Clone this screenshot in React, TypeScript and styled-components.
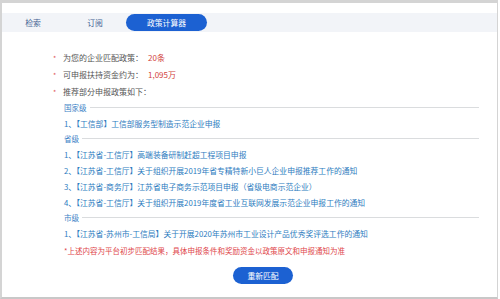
import React from "react";
import styled, { createGlobalStyle } from "styled-components";

const Global = createGlobalStyle`
  html, body { margin: 0; padding: 0; background: #ffffff; }
  body { font-family: "Noto Sans CJK SC", "Noto Sans", sans-serif; }
  * { box-sizing: border-box; }
`;

const Frame = styled.div`
  width: 498px;
  height: 299px;
  border-top: 3px solid #d4d4d4;
  border-left: 2px solid #d4d4d4;
  border-right: 1px solid #d4d4d4;
  border-bottom: 2px solid #c8c8c8;
  background: #ffffff;
  display: flex;
  flex-direction: column;
`;

const TabBar = styled.div`
  margin-top: 10px;
  height: 19px;
  background: #f2f4f8;
  display: grid;
  grid-template-columns: 62px 62px 81px;
  align-items: center;
`;

const Tab = styled.div<{ $active?: boolean }>`
  height: 17px;
  display: flex;
  align-items: center;
  justify-content: center;
  font-size: 7.8px;
  color: ${(p) => (p.$active ? "#ffffff" : "#3f5f92")};
  background: ${(p) => (p.$active ? "#1c61d2" : "transparent")};
  border-radius: 9px;
`;

const Content = styled.div`
  padding: 17px 18px 0 49px;
  display: flex;
  flex-direction: column;
`;

const InfoRow = styled.div`
  display: flex;
  align-items: center;
  height: 17px;
  font-size: 8px;
  color: #555555;
  white-space: nowrap;
`;

const Star = styled.span`
  flex: none;
  width: 12px;
  padding-left: 2px;
  color: #e05858;
  font-size: 7px;
`;

const Label = styled.span`
  flex: none;
  min-width: 85px;
`;

const Value = styled.span`
  color: #d2433d;
`;

const Block = styled.div`
  padding-left: 13px;
  display: flex;
  flex-direction: column;
`;

const Section = styled.div`
  height: 15px;
  display: flex;
  align-items: center;
  gap: 3px;
  font-size: 7.5px;
  color: #3d82c6;
`;

const Rule = styled.span`
  flex: 1;
  height: 0;
  border-top: 1px solid #dadcde;
`;

const Item = styled.div`
  height: 16px;
  display: flex;
  align-items: center;
  font-size: 7.8px;
  color: #2d7cc0;
  white-space: nowrap;
`;

const Note = styled.div`
  margin-top: 1px;
  height: 16px;
  display: flex;
  align-items: center;
  font-size: 7.5px;
  color: #e0474c;
  white-space: nowrap;
`;

const ButtonRow = styled.div`
  display: flex;
  justify-content: center;
  padding-right: 4px;
  margin-top: 9px;
`;

const Button = styled.button`
  width: 60px;
  height: 17px;
  border: none;
  border-radius: 9px;
  background: #1c61d2;
  color: #ffffff;
  font-family: inherit;
  font-size: 7.8px;
  padding: 0;
`;

const sections = [
  {
    title: "国家级",
    items: ["1、【工信部】工信部服务型制造示范企业申报"],
  },
  {
    title: "省级",
    items: [
      "1、【江苏省-工信厅】高端装备研制赶超工程项目申报",
      "2、【江苏省-工信厅】关于组织开展2019年省专精特新小巨人企业申报推荐工作的通知",
      "3、【江苏省-商务厅】江苏省电子商务示范项目申报（省级电商示范企业）",
      "4、【江苏省-工信厅】关于组织开展2019年度省工业互联网发展示范企业申报工作的通知",
    ],
  },
  {
    title: "市级",
    items: ["1、【江苏省-苏州市-工信局】关于开展2020年苏州市工业设计产品优秀奖评选工作的通知"],
  },
];

export default function App() {
  return (
    <>
      <Global />
      <Frame>
        <TabBar>
          <Tab>检索</Tab>
          <Tab>订阅</Tab>
          <Tab $active>政策计算器</Tab>
        </TabBar>
        <Content>
          <InfoRow>
            <Star>*</Star>
            <Label>为您的企业匹配政策：</Label>
            <Value>20条</Value>
          </InfoRow>
          <InfoRow>
            <Star>*</Star>
            <Label>可申报扶持资金约为：</Label>
            <Value>1,095万</Value>
          </InfoRow>
          <InfoRow>
            <Star>*</Star>
            <Label>推荐部分申报政策如下：</Label>
          </InfoRow>
          <Block>
            {sections.map((s) => (
              <React.Fragment key={s.title}>
                <Section>
                  {s.title}
                  <Rule />
                </Section>
                {s.items.map((it) => (
                  <Item key={it}>{it}</Item>
                ))}
              </React.Fragment>
            ))}
            <Note>*上述内容为平台初步匹配结果，具体申报条件和奖励资金以政策原文和申报通知为准</Note>
          </Block>
          <ButtonRow>
            <Button>重新匹配</Button>
          </ButtonRow>
        </Content>
      </Frame>
    </>
  );
}
